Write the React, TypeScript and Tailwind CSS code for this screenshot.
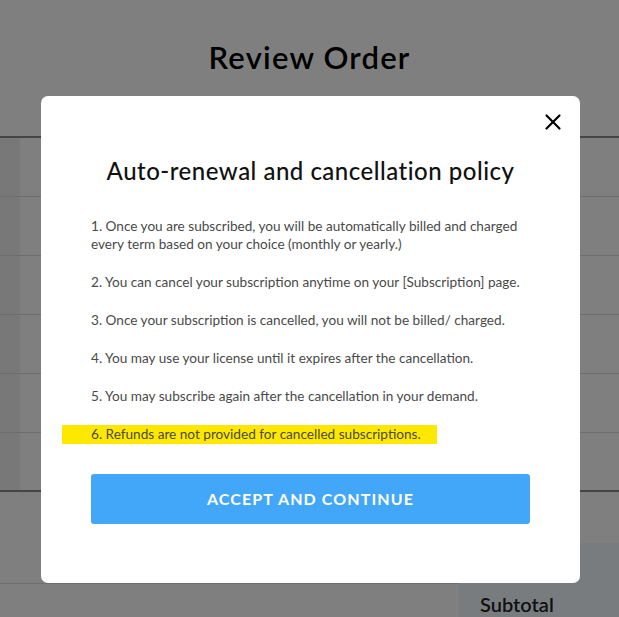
import { X } from "lucide-react";

const policies = [
  "1. Once you are subscribed, you will be automatically billed and charged every term based on your choice (monthly or yearly.)",
  "2. You can cancel your subscription anytime on your [Subscription] page.",
  "3. Once your subscription is cancelled, you will not be billed/ charged.",
  "4. You may use your license until it expires after the cancellation.",
  "5. You may subscribe again after the cancellation in your demand.",
];

export default function App() {
  return (
    <div
      className="relative h-[617px] w-full overflow-hidden bg-white"
      style={{ fontFamily: "Lato, 'Open Sans', sans-serif" }}
    >
      {/* Page behind the dialog */}
      <div className="flex h-[136px] justify-center pt-[37px]">
        <h1 className="text-[31px] font-semibold leading-[40px] tracking-[1.2px] text-black">Review Order</h1>
      </div>

      <div className="border-t-2 border-[#8a8a8a]">
        {[0, 1, 2, 3, 4, 5].map((i) => (
          <div
            key={i}
            className={`flex h-[59px] ${i === 5 ? "border-b-2 border-[#8a8a8a]" : "border-b border-[#dcdcdc]"}`}
          >
            <div className="w-[20px] bg-[#f1f1f1]" />
            <div className="flex-1" />
          </div>
        ))}
      </div>

      <div className="flex">
        <div className="flex-1">
          <div className="h-[92px] border-b border-[#dcdcdc]" />
        </div>
        <div className="mt-[51px] h-[80px] w-[160px] bg-[#f3f9ff] pl-[21px] pt-[49px]">
          <span className="text-[20px] font-semibold leading-[24px] text-[#222]">Subtotal</span>
        </div>
      </div>

      {/* Overlay + dialog */}
      <div className="absolute inset-0 flex justify-center bg-black/50 pl-[2px] pt-[96px]">
        <div className="relative h-fit w-[539px] rounded-[7px] bg-white px-[50px] pb-[59px] pt-[60px]">
          <button className="absolute right-[14px] top-[13px] text-black">
            <X size={26} strokeWidth={2} />
          </button>

          <h2 className="text-center text-[24px] font-medium leading-[30px] tracking-[0.5px] text-[#111]">
            Auto-renewal and cancellation policy
          </h2>

          <div className="mt-[31px] flex flex-col gap-[20px] text-[13.6px] font-normal leading-[18px] text-[#4a4a4a]">
            {policies.map((p) => (
              <p key={p}>{p}</p>
            ))}
            <p className="-ml-[29px] w-[375px] bg-[#ffe800] pl-[29px] leading-[19px]">
              6. Refunds are not provided for cancelled subscriptions.
            </p>
          </div>

          <button className="mt-[30px] flex h-[50px] w-full items-center justify-center rounded-[3px] bg-[#42a7f8] text-[16px] font-bold tracking-[1.1px] text-white">
            ACCEPT AND CONTINUE
          </button>
        </div>
      </div>
    </div>
  );
}
